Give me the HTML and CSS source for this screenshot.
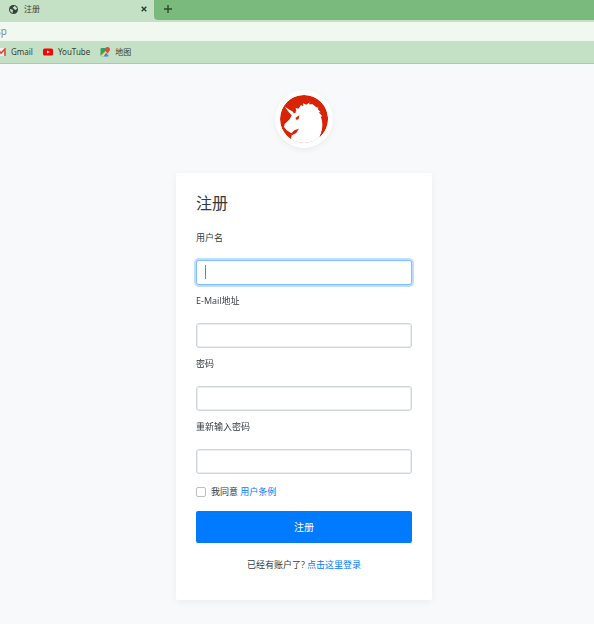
FILE: index.html
```html
<!DOCTYPE html>
<html lang="zh-CN">
<head>
<meta charset="utf-8">
<title>注册</title>
<link rel="stylesheet" href="styles.css">
</head>
<body>
<header class="browser">
  <div class="tabstrip">
    <div class="tab">
      <svg class="globe" viewBox="0 0 20 20" aria-hidden="true">
        <circle cx="10" cy="10" r="10" fill="#35423a"/>
        <path d="M2 9l5 1 2 3-1 2 1 3C4 17 2 13 2 9zM11 2c3 0 6 3 7 6l-3 3-3-1-1-2-3-1 1-2 2-1z" fill="#c5e1c5"/>
      </svg>
      <span class="tab-title">注册</span>
      <button class="icon-button" type="button" aria-label="关闭">
        <svg class="close" viewBox="0 0 6 6"><path d="M.7.7l4.6 4.6M5.3.7L.7 5.3" stroke="#2c3a2e" stroke-width="1.4"/></svg>
      </button>
    </div>
    <button class="icon-button new-tab" type="button" aria-label="新标签页">
      <svg class="plus" viewBox="0 0 8 8"><path d="M4 0v8M0 4h8" stroke="#2c4a2e" stroke-width="1.4"/></svg>
    </button>
  </div>
  <div class="address">sp</div>
  <nav class="bookmarks">
    <a class="bookmark" href="#">
      <svg class="gmail" viewBox="0 0 10 8" aria-hidden="true"><path d="M0 0h10v8H0z" fill="#f6eeee"/><path d="M1 8V1l4 4 4-4v7" fill="none" stroke="#e0453a" stroke-width="1.6"/></svg>
      Gmail</a>
    <a class="bookmark" href="#">
      <svg class="youtube" viewBox="0 0 10 8" aria-hidden="true"><rect y=".5" width="10" height="7" rx="1.6" fill="#f00"/><path d="M4 2.4v3.2L6.8 4z" fill="#fff"/></svg>
      YouTube</a>
    <a class="bookmark" href="#">
      <svg class="maps" viewBox="0 0 20 20" aria-hidden="true"><rect x="1" y="2" width="16" height="17" rx="2" fill="#35a160"/><path d="M1 18L14 6l3 3v8l-2 2H2z" fill="#e8ece9"/><path d="M7 19l5-8 5 7-2 1z" fill="#4a83dc"/><path d="M2 17L14 5l2 2L4 19z" fill="#f0cb4b"/><path d="M15 0c-3 0-5 2-5 5 0 4 4 5 5 9 1-4 5-5 5-9 0-3-2-5-5-5z" fill="#e24a3c"/></svg>
      地图</a>
  </nav>
</header>
<main class="page">
  <div class="brand">
    <svg class="logo" viewBox="48 45 144 144" role="img" aria-label="Logo">
      <circle cx="120" cy="117" r="72" fill="#d82404"/>
      <path d="M62 80L89 97 97 94 95 84 103 86 111 75 118 79 117 70 127 74 137 67 135 73 146 73 157 82 164 83 161 87 170 97 164 97 175 109 170 110C178 128 177 148 167 171L196 165V196H81V178L83 166 96 160 105 146 91 151 82 160 68 151 60 141 62 132 77 118 83 106 76 98Z" fill="#fff"/>
      <path d="M192 110C191 133 181 156 167 171C175 152 178 140 176 118L178 104Z" fill="#d82404"/>
      <path d="M94 114L106 106 104 117 98 120ZM87 95L94 91 95 99 89 100Z" fill="#d82404"/>
    </svg>
  </div>
  <section class="card">
    <h1 class="title">注册</h1>
    <form>
      <div class="field">
        <label for="name">用户名</label>
        <input class="control" id="name" type="text" autofocus>
        <span class="caret" aria-hidden="true"></span>
      </div>
      <div class="field">
        <label for="email">E-Mail地址</label>
        <input class="control" id="email" type="email">
      </div>
      <div class="field">
        <label for="password">密码</label>
        <input class="control" id="password" type="password">
      </div>
      <div class="field">
        <label for="confirm">重新输入密码</label>
        <input class="control" id="confirm" type="password">
      </div>
      <div class="agree">
        <input class="check" id="agree" type="checkbox">
        <label for="agree">我同意 <a href="#">用户条例</a></label>
      </div>
      <button class="submit" type="submit">注册</button>
      <p class="login">已经有账户了? <a href="#">点击这里登录</a></p>
    </form>
  </section>
</main>
</body>
</html>
```
FILE: styles.css
```css
* {
  box-sizing: border-box;
}

body {
  margin: 0;
  min-height: 100vh;
  background: #f7f9fb;
  color: #343a40;
  font: 9px/14px "Open Sans", "Noto Sans CJK SC", sans-serif;
}

a {
  color: #007bff;
  text-decoration: none;
}

svg {
  display: block;
  flex: none;
}

.browser {
  overflow: hidden;
  background: #c5e1c5;
  border-bottom: 1px solid #a5cba8;
  color: #35423a;
  font-size: 8px;
}

.tabstrip {
  display: flex;
  height: 20px;
  background: linear-gradient(to right, #c5e1c5 170px, #7aba7c 170px);
}

.tab {
  display: flex;
  align-items: center;
  width: 154px;
  padding: 0 7px 2px 9px;
  background: #c5e1c5;
}

.globe {
  width: 9px;
  height: 9px;
}

.tab-title {
  flex: 1;
  margin-left: 6px;
}

.icon-button {
  padding: 0;
  border: 0;
  background: none;
}

.close {
  width: 6px;
  height: 6px;
}

.new-tab {
  flex: 1;
  padding: 0 0 2px 10px;
  background: #7aba7c;
  border-bottom-left-radius: 4px;
}

.plus {
  width: 8px;
  height: 8px;
}

.address {
  height: 19px;
  margin: 2px 0 0 -4px;
  background: #f0f8f0;
  color: #7b857d;
  font-size: 10px;
  line-height: 18px;
}

.bookmarks {
  display: flex;
  align-items: center;
  gap: 10px;
  height: 22px;
  margin-left: -4px;
  font-family: "Noto Sans", "Noto Sans CJK SC", sans-serif;
}

.bookmark {
  display: flex;
  align-items: center;
  gap: 5px;
  color: #35423a;
}

.gmail,
.youtube {
  width: 10px;
  height: 8px;
}

.maps {
  width: 10px;
  height: 10px;
}

.page {
  display: flex;
  flex-direction: column;
  align-items: center;
  padding: 26px 16px 24px 30px;
}

.brand {
  padding: 5px;
  border-radius: 50%;
  background: #fff;
  box-shadow: 0 2px 6px rgba(0, 0, 0, 0.06);
}

.logo {
  width: 48px;
  height: 48px;
  border-radius: 50%;
}

.card {
  width: 100%;
  max-width: 256px;
  margin-top: 25px;
  padding: 20px 20px 28px;
  border-radius: 2px;
  background: #fff;
  box-shadow: 0 2px 8px rgba(0, 0, 0, 0.05);
}

.title {
  margin: 0 0 18px;
  font-size: 16px;
  font-weight: 400;
  line-height: 20px;
}

.field {
  position: relative;
  margin-bottom: 9px;
}

.field label {
  display: block;
  margin-bottom: 15px;
}

.control {
  display: block;
  width: 100%;
  height: 25px;
  padding: 0 8px;
  border: 1px solid #ced4da;
  border-radius: 3px;
  background: #fff;
  box-shadow: inset 0 0 0 1px #eceff2;
  caret-color: transparent;
  font: inherit;
}

.control:focus {
  border-color: #80bdff;
  outline: 0;
  box-shadow: 0 0 0 2px #bfdeff;
}

.caret {
  display: none;
  position: absolute;
  bottom: 6px;
  left: 9px;
  width: 1px;
  height: 14px;
  background: #7b8585;
}

.control:focus + .caret {
  display: block;
}

.agree {
  display: flex;
  align-items: center;
  gap: 5px;
  margin-top: 11px;
}

.check {
  width: 10px;
  height: 10px;
  margin: 0;
  border: 1px solid #b9c0c8;
  border-radius: 2px;
  background: #fff;
  appearance: none;
}

.check:checked {
  background: #007bff;
}

.submit {
  display: block;
  width: 100%;
  height: 32px;
  margin-top: 12px;
  padding: 0;
  border: 0;
  border-radius: 2px;
  background: #007bff;
  color: #fff;
  font: inherit;
  font-size: 10px;
}

.login {
  margin: 15px 0 0;
  text-align: center;
}
```
